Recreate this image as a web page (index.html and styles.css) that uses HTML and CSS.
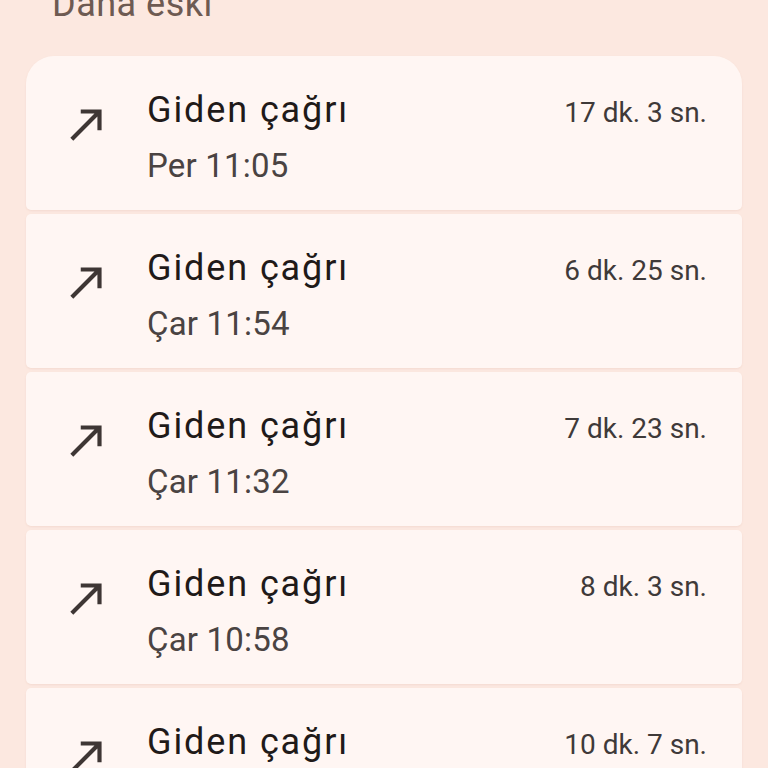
FILE: index.html
```html
<!DOCTYPE html>
<html lang="tr">

<head>
    <meta charset="UTF-8">
    <meta name="viewport" content="width=device-width, initial-scale=1.0">
    <title>Arama geçmişi</title>
    <link rel="stylesheet" href="styles.css">
</head>

<body>
    <div class="page">
        <h2 class="list-header">Daha eski</h2>

        <div class="call-list">
            <div class="call-item">
                <svg class="call-icon" viewBox="0 0 24 24"><path d="M9 5v2h6.59L4 18.59 5.41 20 17 8.41V15h2V5z"/></svg>
                <div class="call-text">
                    <div class="call-row">
                        <span class="call-title">Giden çağrı</span>
                        <span class="call-duration">17 dk. 3 sn.</span>
                    </div>
                    <div class="call-time">Per 11:05</div>
                </div>
            </div>

            <div class="call-item">
                <svg class="call-icon" viewBox="0 0 24 24"><path d="M9 5v2h6.59L4 18.59 5.41 20 17 8.41V15h2V5z"/></svg>
                <div class="call-text">
                    <div class="call-row">
                        <span class="call-title">Giden çağrı</span>
                        <span class="call-duration">6 dk. 25 sn.</span>
                    </div>
                    <div class="call-time">Çar 11:54</div>
                </div>
            </div>

            <div class="call-item">
                <svg class="call-icon" viewBox="0 0 24 24"><path d="M9 5v2h6.59L4 18.59 5.41 20 17 8.41V15h2V5z"/></svg>
                <div class="call-text">
                    <div class="call-row">
                        <span class="call-title">Giden çağrı</span>
                        <span class="call-duration">7 dk. 23 sn.</span>
                    </div>
                    <div class="call-time">Çar 11:32</div>
                </div>
            </div>

            <div class="call-item">
                <svg class="call-icon" viewBox="0 0 24 24"><path d="M9 5v2h6.59L4 18.59 5.41 20 17 8.41V15h2V5z"/></svg>
                <div class="call-text">
                    <div class="call-row">
                        <span class="call-title">Giden çağrı</span>
                        <span class="call-duration">8 dk. 3 sn.</span>
                    </div>
                    <div class="call-time">Çar 10:58</div>
                </div>
            </div>

            <div class="call-item">
                <svg class="call-icon" viewBox="0 0 24 24"><path d="M9 5v2h6.59L4 18.59 5.41 20 17 8.41V15h2V5z"/></svg>
                <div class="call-text">
                    <div class="call-row">
                        <span class="call-title">Giden çağrı</span>
                        <span class="call-duration">10 dk. 7 sn.</span>
                    </div>
                    <div class="call-time">Çar 10:41</div>
                </div>
            </div>
        </div>
    </div>
</body>

</html>
```

FILE: styles.css
```css
body {
    background-color: #fce8e0;
    font-family: 'Roboto', 'Liberation Sans', sans-serif;
    color: #1f1a19;
    margin: 0;
    padding: 0;
    height: 768px;
    overflow: hidden;
}

.page {
    padding: 0 26px;
}

.list-header {
    margin: -18px 0 0 26px;
    font-size: 36px;
    line-height: 44px;
    font-weight: 400;
    color: #6e5a52;
    letter-spacing: 0.5px;
}

.call-list {
    margin-top: 30px;
    display: flex;
    flex-direction: column;
    gap: 4px;
}

.call-item {
    display: flex;
    align-items: flex-start;
    height: 154px;
    box-sizing: border-box;
    padding: 32px 35px 0 36px;
    background-color: #fff6f3;
    border-radius: 5px;
    box-shadow: 0 1px 2px rgba(200, 150, 130, 0.15);
}

.call-item:first-child {
    border-radius: 28px 28px 5px 5px;
}

.call-icon {
    width: 50px;
    height: 50px;
    margin-top: 11px;
    margin-right: 35px;
    fill: #3e3634;
    flex-shrink: 0;
}

.call-text {
    flex: 1;
}

.call-row {
    display: flex;
    justify-content: space-between;
    align-items: baseline;
}

.call-title {
    font-size: 36px;
    line-height: 44px;
    letter-spacing: 1.9px;
    color: #1f1a19;
}

.call-duration {
    font-size: 28px;
    color: #3f3a39;
}

.call-time {
    margin-top: 14px;
    font-size: 33px;
    line-height: 40px;
    letter-spacing: 0.2px;
    color: #4a4342;
}
```
